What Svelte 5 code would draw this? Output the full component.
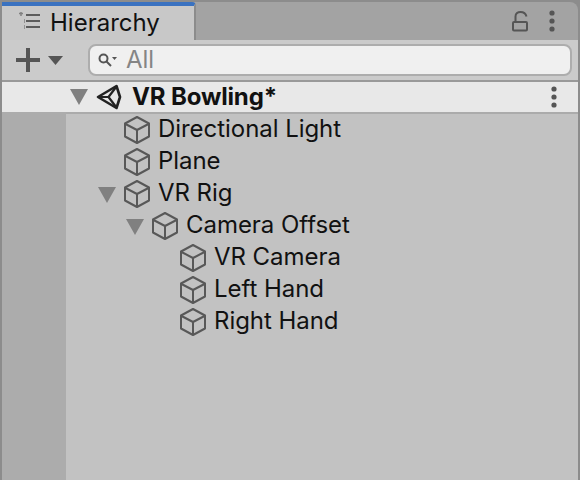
<script>
  const rows = [
    { name: 'Directional Light', depth: 0 },
    { name: 'Plane', depth: 0 },
    { name: 'VR Rig', depth: 0, open: true },
    { name: 'Camera Offset', depth: 1, open: true },
    { name: 'VR Camera', depth: 2 },
    { name: 'Left Hand', depth: 2 },
    { name: 'Right Hand', depth: 2 }
  ];
</script>

{#snippet cube()}
  <svg class="cube" width="28" height="30" viewBox="0 0 28 30" fill="none" stroke="#585858" stroke-width="2" stroke-linejoin="round">
    <path d="M14 2 26 8.500V21.500L14 28 2 21.500V8.500Z" />
    <path d="M2.500 9 14 15 25.500 9M14 15V27.500" />
  </svg>
{/snippet}

{#snippet arrow()}
  <svg class="arrow" width="18" height="16" viewBox="0 0 18 16"><path d="M0 0H18L9 16Z" fill="#808080" /></svg>
{/snippet}

{#snippet dots()}
  <svg width="6" height="22" viewBox="0 0 6 22" fill="#555">
    <circle cx="3" cy="3" r="2.600" /><circle cx="3" cy="11" r="2.600" /><circle cx="3" cy="19" r="2.600" />
  </svg>
{/snippet}

<div class="window">
  <header class="tabbar">
    <div class="tab">
      <svg class="list-icon" width="22" height="20" viewBox="0 0 22 20" fill="none" stroke="#5c5c5c" stroke-width="2">
        <path d="M0 1.500H4M2 0V4" stroke="#808080" stroke-width="1.500" />
        <path d="M7 3H21M7 9H21M7 15H21" />
        <path d="M5 8H6M5 10H6M5 14H6M5 16H6" stroke="#808080" stroke-width="1.500" />
      </svg>
      <span>Hierarchy</span>
    </div>
    <div class="tab-actions">
      <svg width="17" height="21" viewBox="0 0 17 21" fill="none" stroke="#555" stroke-width="2">
        <rect x="1" y="11" width="14" height="8.500" rx="1" />
        <path d="M3.500 11V5.500C3.500 -0.500 13 -0.500 14.500 5.500" />
      </svg>
      {@render dots()}
    </div>
  </header>

  <div class="toolbar">
    <div class="add">
      <svg width="24" height="24" viewBox="0 0 24 24" fill="#555"><path d="M10 0H14V10H24V14H14V24H10V14H0V10H10Z" /></svg>
      <svg width="15" height="9" viewBox="0 0 15 9" fill="#555"><path d="M0 0H15L7.500 9Z" /></svg>
    </div>
    <div class="search">
      <svg width="19" height="15" viewBox="0 0 19 15" fill="none" stroke="#555" stroke-width="2">
        <circle cx="5.500" cy="5.500" r="4" />
        <path d="M8.500 8.500 13 13" />
        <path d="M14 4H19L16.500 7Z" fill="#555" stroke="none" />
      </svg>
      <span>All</span>
    </div>
  </div>

  <div class="scene">
    <div class="scene-title">
      {@render arrow()}
      <svg class="unity" width="26" height="26" viewBox="0 0 26 26" fill="none" stroke="#222" stroke-width="2.600" stroke-linejoin="round">
        <path d="M2 13 20.500 2 24 13 20.500 24Z" />
        <path d="M2 13H12.500L20.500 2.500M12.500 13 20.500 23.500" stroke-width="2.200" />
      </svg>
      <strong>VR Bowling*</strong>
    </div>
    {@render dots()}
  </div>

  <div class="content">
    <div class="gutter"></div>
    <ul class="tree">
      {#each rows as row}
        <li class="row" style="padding-left: {row.depth * 28}px">
          <span class="toggle">{#if row.open}{@render arrow()}{/if}</span>
          {@render cube()}
          <span class="label">{row.name}</span>
        </li>
      {/each}
    </ul>
  </div>
</div>

<style>
  :global(body) {
    margin: 0;
    background: #8c8c8c;
  }

  .window {
    box-sizing: border-box;
    width: 580px;
    height: 480px;
    display: flex;
    flex-direction: column;
    overflow: hidden;
    border-left: 2px solid #8c8c8c;
    border-right: 2px solid #8c8c8c;
    border-top: 2px solid #8c8c8c;
    font-family: Inter, "Liberation Sans", sans-serif;
    color: #111;
  }

  .tabbar {
    height: 38px;
    flex: none;
    display: flex;
    justify-content: space-between;
    background: #a3a3a3;
    border-top-right-radius: 8px;
  }

  .tab {
    box-sizing: border-box;
    width: 194px;
    display: flex;
    align-items: center;
    gap: 9px;
    padding-left: 17px;
    background: #c8c8c8;
    border-top: 4px solid #3a72c0;
    border-right: 2px solid #8c8c8c;
    border-top-right-radius: 4px;
  }

  .list-icon {
    margin-top: -2px;
  }

  .tab span {
    font-size: 24px;
    margin-bottom: 2px;
  }

  .tab-actions {
    display: flex;
    align-items: center;
    gap: 20px;
    padding-right: 23px;
    color: #555;
  }

  .toolbar {
    height: 40px;
    flex: none;
    display: flex;
    align-items: center;
    gap: 25px;
    background: #cbcbcb;
  }

  .add {
    display: flex;
    align-items: center;
    gap: 8px;
    padding-left: 14px;
  }

  .search {
    box-sizing: border-box;
    width: 484px;
    height: 32px;
    display: flex;
    align-items: center;
    gap: 9px;
    padding-left: 8px;
    background: #f0f0f0;
    border: 2px solid #adadad;
    border-radius: 8px;
    font-size: 24px;
    color: #858585;
  }

  .search span {
    margin-bottom: 1px;
  }

  .scene {
    box-sizing: border-box;
    height: 32px;
    flex: none;
    display: flex;
    align-items: center;
    justify-content: space-between;
    padding: 0 21px 0 68px;
    background: #e8e8e8;
    border-top: 2px solid #999;
  }

  .scene-title {
    display: flex;
    align-items: center;
    gap: 8px;
  }

  .scene-title strong {
    font-size: 24px;
    font-weight: 700;
    letter-spacing: -0.15px;
    margin: 0 0 2px 2px;
  }

  .content {
    flex: 1;
    display: flex;
  }

  .gutter {
    width: 64px;
    flex: none;
    background: #acacac;
  }

  .tree {
    flex: 1;
    margin: 0;
    padding: 0;
    list-style: none;
    background: #c2c2c2;
    border-top: 2px solid #ababab;
  }

  .row {
    height: 32px;
    display: flex;
    align-items: center;
    font-size: 24px;
  }

  .row:first-child {
    margin-top: -1px;
  }

  .toggle {
    width: 50px;
    flex: none;
    display: flex;
    justify-content: flex-end;
    margin: 4px 6px 0 0;
  }

  .cube {
    margin: 2px 0 0 1px;
    flex: none;
  }

  .label {
    margin: 0 0 2px 7px;
    letter-spacing: -0.05px;
  }
</style>
